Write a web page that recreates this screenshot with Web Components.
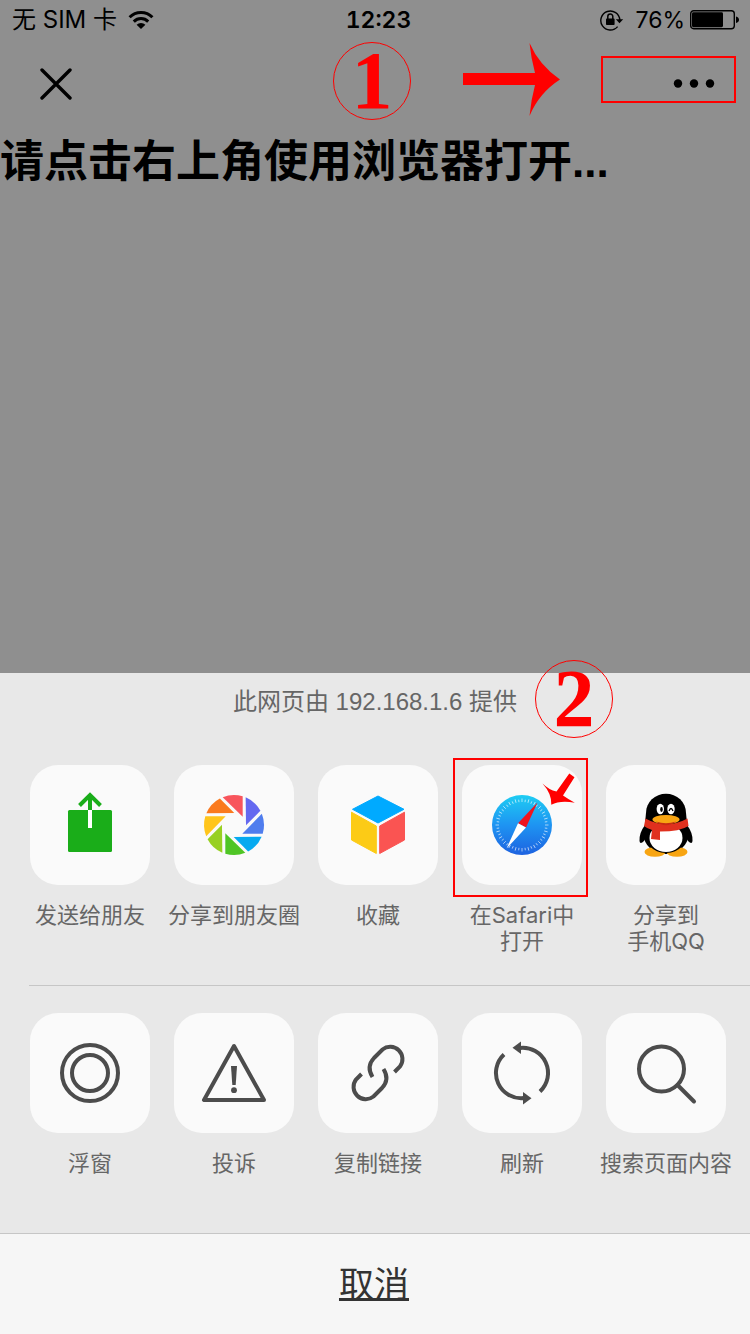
<!DOCTYPE html>
<html lang="zh-CN">
<head>
<meta charset="utf-8">
<meta name="viewport" content="width=device-width, initial-scale=1">
<title>请使用浏览器打开</title>
<style>
  html, body { margin: 0; min-height: 100%; }
  body { font-family: Inter, "Noto Sans CJK SC", sans-serif; color: #000; background: #8f8f8f; }
</style>
</head>
<body>
<guide-page>
  <status-bar slot="top"></status-bar>
  <nav-bar slot="top"></nav-bar>
  <page-title slot="top">请点击右上角使用浏览器打开...</page-title>
  <share-sheet>
    <span slot="source">此网页由 192.168.1.6 提供</span>
    <step-mark slot="mark">2</step-mark>
    <share-item slot="share" icon="send">发送给朋友</share-item>
    <share-item slot="share" icon="moments">分享到朋友圈</share-item>
    <share-item slot="share" icon="favorite">收藏</share-item>
    <share-item slot="share" icon="safari" marked>在Safari中<br>打开</share-item>
    <share-item slot="share" icon="qq">分享到<br>手机QQ</share-item>
    <share-item slot="tools" icon="float">浮窗</share-item>
    <share-item slot="tools" icon="report">投诉</share-item>
    <share-item slot="tools" icon="link">复制链接</share-item>
    <share-item slot="tools" icon="refresh">刷新</share-item>
    <share-item slot="tools" icon="search">搜索页面内容</share-item>
    <span slot="cancel">取消</span>
  </share-sheet>
</guide-page>

<script>
const define = (name, html, setup) => customElements.define(name, class extends HTMLElement {
  constructor() {
    super();
    this.attachShadow({ mode: 'open' }).innerHTML = html;
  }
  connectedCallback() { if (setup) setup(this, this.shadowRoot); }
});

define('guide-page', `
  <style>
    :host { display: flex; flex-direction: column; min-height: 100vh; }
    main { flex: 1; }
  </style>
  <main><slot name="top"></slot></main>
  <slot></slot>`);

define('status-bar', `
  <style>
    :host { display: grid; grid-template-columns: 1fr auto 1fr; align-items: center;
      height: 40px; padding: 0 11px 0 12px; font-size: 24px; line-height: 40px; }
    div { display: flex; align-items: center; }
    .left { gap: 11px; }
    .right { justify-content: flex-end; gap: 5px; font-size: 23px; }
    .lock { margin-right: 6px; }
    time { font-size: 23px; font-weight: 600; font-variant-numeric: tabular-nums; padding-left: 6px; }
    svg { display: block; }
  </style>
  <div class="left"><span>无 SIM 卡</span>
    <svg width="26" height="20" viewBox="0 0 26 20" fill="none" stroke="#000" stroke-width="3">
      <path d="M1.6 7.2a16 16 0 0 1 22.8 0"/><path d="M5.8 11.6a10.2 10.2 0 0 1 14.4 0"/>
      <path d="M13 19l-4.4-4.2a6.2 6.2 0 0 1 8.8 0z" fill="#000" stroke="none"/>
    </svg>
  </div>
  <time>12:23</time>
  <div class="right">
    <svg class="lock" width="24" height="22" viewBox="0 0 24 22">
      <path d="M17.6 17.6A9.5 9.5 0 1 1 19.8 11" fill="none" stroke="#000" stroke-width="1.4"/>
      <path d="M15.8 10.2h7.4l-3.7 4z"/>
      <rect x="6" y="9.6" width="8.6" height="6.4" rx=".8"/>
      <path d="M7.8 10V7.6a2.5 2.5 0 0 1 5 0V10" fill="none" stroke="#000" stroke-width="1.5"/>
    </svg>
    <span>76%</span>
    <svg width="49" height="20" viewBox="0 0 49 20">
      <rect x=".7" y=".7" width="43.6" height="18" rx="3" fill="none" stroke="#000" stroke-width="1.4"/>
      <rect x="2" y="2.2" width="31" height="15" rx="1.4"/><path d="M46 6.5q3 .8 3 3.3t-3 3.3z"/>
    </svg>
  </div>`);

define('nav-bar', `
  <style>
    :host { display: flex; position: relative; justify-content: space-between; align-items: center;
      height: 78px; padding: 0 14px 0 32px; }
    button { display: flex; align-items: center; margin: 0; padding: 0; border: 0; background: none; }
    .close { width: 48px; height: 48px; margin-top: 10px; justify-content: center; }
    .more { box-sizing: border-box; width: 135px; height: 47px; padding: 8px 19px 0 0;
      justify-content: flex-end; border: 2px solid #f00; }
    step-mark { position: absolute; left: calc(50% - 42px); top: 2px; }
    .arrow { position: absolute; left: calc(50% + 88px); top: 3px; }
  </style>
  <button class="close" aria-label="关闭">
    <svg width="32" height="32" viewBox="0 0 32 32" stroke="#000" stroke-width="3.400" stroke-linecap="round"><path d="M2 2l28 28M30 2L2 30"/></svg>
  </button>
  <step-mark>1</step-mark>
  <svg class="arrow" width="98" height="74" viewBox="0 0 98 74" fill="#f00">
    <path d="M0 30H72Q68 15 66.500 0Q76 22 97 36.500Q76 50 66.500 73Q68 57 72 42H0Z"/>
  </svg>
  <button class="more" aria-label="更多">
    <svg width="42" height="9" viewBox="0 0 42 9"><circle cx="5" cy="4.500" r="4.200"/><circle cx="21" cy="4.500" r="4.200"/><circle cx="37" cy="4.500" r="4.200"/></svg>
  </button>`);

define('step-mark', `
  <style>
    :host { display: flex; box-sizing: border-box; width: 78px; height: 78px; justify-content: center;
      border: 1px solid #f00; border-radius: 50%; color: #f00;
      font: bold 82px/76px "Liberation Serif", serif; }
  </style>
  <slot></slot>`);

define('page-title', `
  <style>
    :host { display: block; }
    h1 { margin: 0; padding: 12px 0; font: bold 44px/64px "Liberation Sans", "Noto Sans CJK SC", sans-serif; }
  </style>
  <h1><slot></slot></h1>`);

define('share-sheet', `
  <style>
    :host { display: block; position: relative; background: #e8e8e8; }
    header { height: 92px; box-sizing: border-box; padding-top: 14px; text-align: center;
      font: 24px/30px "Liberation Sans", "Noto Sans CJK SC", sans-serif; color: #666; }
    .row { display: flex; padding: 0 0 0 18px; }
    .share { padding-bottom: 31px; }
    .tools { padding-top: 27px; padding-bottom: 57px; }
    hr { margin: 0 0 0 29px; border: 0; border-top: 1px solid #c6c6c6; }
    .cancel { display: block; width: 100%; height: 101px; margin: 0; padding: 0 2px 4px 0; border: 0;
      border-top: 1px solid #c6c6c6; background: #f6f6f6; color: #333;
      font: 35px/96px "Noto Sans CJK SC", sans-serif; }
    u { text-decoration-thickness: 3px; text-underline-offset: 1px; text-decoration-skip-ink: none; }
    .mark { position: absolute; left: calc(50% + 160px); top: -13px; }
  </style>
  <header><slot name="source"></slot></header>
  <div class="mark"><slot name="mark"></slot></div>
  <div class="row share"><slot name="share"></slot></div>
  <hr>
  <div class="row tools"><slot name="tools"></slot></div>
  <button class="cancel"><u><slot name="cancel"></slot></u></button>`);

const blades = ['#f8555c', '#6468f0', '#4f7dee', '#06aaf0', '#4fc525', '#98d022', '#ffc51c', '#fa7a1e']
  .map((c, i) => `<path fill="${c}" transform="rotate(${i * 45})" d="M-11.300-27.800A30 30 0 0 1 8.700-28.700V-8.300Z"/>`).join('');
const ticks = Array.from({ length: 48 }, (_, i) =>
  `<path transform="rotate(${i * 7.5} 60 60)" d="M60 ${i % 2 ? 34.5 : 33.5}V37"/>`).join('');
const line = body => `<g fill="none" stroke="#4c4c4c" stroke-width="4">${body}</g>`;
const linkHalf = '<path d="M76.500 59L82 53.500A12.300 12.300 0 0 0 64.500 36.500L56 45Q48 53.500 54.500 64"/>';
const turnHalf = '<path d="M58 35A25.200 25.200 0 0 1 78 78.500"/><path d="M50.500 34.700L59 28.500V41Z" fill="#4c4c4c" stroke="none"/>';
const half = body => body + `<g transform="rotate(180 60 60)">${body}</g>`;

const icons = {
  send: `<g fill="#1aad19"><rect x="38" y="45" width="44" height="42" rx="1.500"/></g>
    <path d="M60 45V31M49.500 40.500L60 30L70.500 40.500" fill="none" stroke="#1aad19" stroke-width="4"/>
    <path d="M60 45V63" stroke="#fff" stroke-width="4"/>`,
  moments: `<g transform="translate(60 60)">${blades}</g>`,
  favorite: `<g stroke-linejoin="round" stroke-width="1">
    <path fill="#00aaff" stroke="#00aaff" d="M60 31L86 44.300L60 58L34.500 44.300Z"/>
    <path fill="#fccb16" stroke="#fccb16" d="M33.500 47.200L58.300 61V88.500L33.500 75Z"/>
    <path fill="#fa5452" stroke="#fa5452" d="M61.700 61L86.500 47.200V75L61.700 88.500Z"/></g>`,
  safari: `<defs><linearGradient id="sky" x2="0" y2="1"><stop stop-color="#1ecdf3"/><stop offset=".5" stop-color="#1e94f2"/><stop offset="1" stop-color="#1d62e0"/></linearGradient></defs>
    <circle cx="60" cy="60" r="30" fill="url(#sky)"/><g stroke="#fff" stroke-width=".8" opacity=".75">${ticks}</g>
    <path fill="#f0141e" d="M75.500 37.500L56 58.300L64 62.500Z"/><path fill="#fff" d="M44.500 83.500L56 58.300L64 62.500Z"/>`,
  qq: `<path d="M39 60Q33 68 33.500 76Q34 80 38 76L44 66ZM81 60Q87 68 86.500 76Q86 80 82 76L76 66Z"/>
    <ellipse cx="60" cy="69" rx="22.500" ry="20"/>
    <ellipse cx="49" cy="87" rx="10.500" ry="4.800" fill="#f8a512"/><ellipse cx="71" cy="87" rx="10.500" ry="4.800" fill="#f8a512"/>
    <ellipse cx="60" cy="48" rx="20" ry="19.300"/>
    <path d="M40 48L39 58Q60 68 81 58L80 48Z"/>
    <path d="M41 66Q39 87 60 88Q81 87 79 66Z"/>
    <ellipse cx="60" cy="73" rx="16.500" ry="14" fill="#fff"/>
    <ellipse cx="54.300" cy="44" rx="3.700" ry="5.300" fill="#fff"/><ellipse cx="65" cy="44" rx="3.700" ry="5.300" fill="#fff"/>
    <ellipse cx="55.500" cy="44.500" rx="1.300" ry="2.400"/><path d="M63 46Q65 41 67 46" fill="none" stroke="#000" stroke-width="1.300"/>
    <path fill="#e0301e" d="M39.500 53.500Q60 65 81.500 53.500L82.500 61Q74 66.500 54 66.500V75L45 74L46 65Q41 63.500 38 61Z"/>
    <ellipse cx="60" cy="54.500" rx="13.500" ry="4.500" fill="#f8a512"/><path d="M50 56.500Q60 60 70 56.500Q60 64 50 56.500Z" fill="#c82a12"/>`,
  float: line('<circle cx="60" cy="60" r="28"/><circle cx="60" cy="60" r="18"/>'),
  report: line('<path stroke-linejoin="round" d="M60 33L30 87H90Z"/>') +
    '<path fill="#4c4c4c" d="M57 53H63L61.700 72H58.300Z"/><circle cx="60" cy="77.200" r="2.900" fill="#4c4c4c"/>',
  link: line(half(linkHalf)),
  refresh: line(half(turnHalf)),
  search: line('<circle cx="55.500" cy="56" r="22.500"/><path stroke-linecap="round" d="M71.500 72L88 88.500"/>')
};

define('share-item', `
  <style>
    :host { display: block; flex: 0 0 144px; }
    button { display: flex; flex-direction: column; align-items: center; width: 100%; margin: 0; padding: 0;
      border: 0; background: none; color: #666; font: inherit; font-size: 22px; line-height: 26px;
      white-space: nowrap; }
    .tile { position: relative; width: 120px; height: 120px; margin-bottom: 17px;
      border-radius: 28px; background: #fafafa; }
    .tile svg { display: block; }
    .frame { display: none; position: absolute; left: -9px; top: -7px; box-sizing: border-box;
      width: 135px; height: 139px; border: 2px solid #f00; }
    :host([marked]) .frame { display: block; }
    .frame svg { margin: 5px 0 0 7px; }
  </style>
  <button>
    <span class="tile"><svg class="icon" width="120" height="120" viewBox="0 0 120 120"></svg>
      <span class="frame"><svg width="120" height="120" viewBox="0 0 120 120"><path fill="#f00" d="M107.300 8.500L112.500 12.300L101 30.500Q106 34 112.800 37.700Q98 35 89.300 39.800Q90 29 80.500 18.500Q87 25 94.500 26.500Z"/></svg></span>
    </span>
    <span><slot></slot></span>
  </button>`, (host, root) => {
    root.querySelector('.icon').innerHTML = icons[host.getAttribute('icon')];
  });
</script>
</body>
</html>
